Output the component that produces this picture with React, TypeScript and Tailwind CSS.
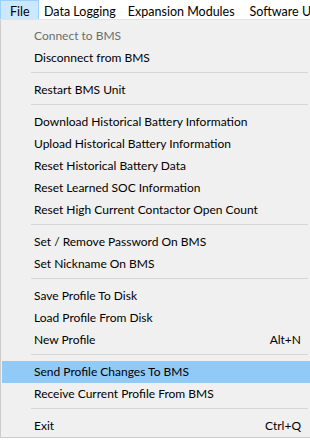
import React from 'react'
import clsx from 'clsx'

type Item =
  | { type: 'item'; label: string; shortcut?: string; disabled?: boolean; active?: boolean }
  | { type: 'sep' }

const items: Array<Item> = [
  { type: 'item', label: 'Connect to BMS', disabled: true },
  { type: 'item', label: 'Disconnect from BMS' },
  { type: 'sep' },
  { type: 'item', label: 'Restart BMS Unit' },
  { type: 'sep' },
  { type: 'item', label: 'Download Historical Battery Information' },
  { type: 'item', label: 'Upload Historical Battery Information' },
  { type: 'item', label: 'Reset Historical Battery Data' },
  { type: 'item', label: 'Reset Learned SOC Information' },
  { type: 'item', label: 'Reset High Current Contactor Open Count' },
  { type: 'sep' },
  { type: 'item', label: 'Set / Remove Password On BMS' },
  { type: 'item', label: 'Set Nickname On BMS' },
  { type: 'sep' },
  { type: 'item', label: 'Save Profile To Disk' },
  { type: 'item', label: 'Load Profile From Disk' },
  { type: 'item', label: 'New Profile', shortcut: 'Alt+N' },
  { type: 'sep' },
  { type: 'item', label: 'Send Profile Changes To BMS', active: true },
  { type: 'item', label: 'Receive Current Profile From BMS' },
  { type: 'sep' },
  { type: 'item', label: 'Exit', shortcut: 'Ctrl+Q' },
]

const MenuBar = () => (
  <div className="flex h-[20px] items-stretch whitespace-nowrap border-b border-[#e3e3e3] bg-white text-[12.5px]">
    <div className="flex w-[39px] shrink-0 items-center border border-b-0 border-[#99d1ff] bg-[#cce8ff] pt-[5px] pl-[9px]">File</div>
    <div className="flex shrink-0 items-center pt-[5px] pl-[5px] pr-[12px]">Data Logging</div>
    <div className="flex shrink-0 items-center pt-[5px] pr-[15px]">Expansion Modules</div>
    <div className="flex shrink-0 items-center pt-[5px]">Software Updates</div>
  </div>
)

const App = () => {
  return (
    <div
      className="h-[440px] w-[310px] overflow-hidden bg-white text-[12px] text-black"
      style={{ fontFamily: 'Lato, sans-serif' }}
    >
      <MenuBar />
      <div className="w-[313px] border border-t-0 border-[#cccccc] bg-[#f0f0f0] pt-[5px] pb-0 pl-[1px]">
        {items.map((item, i) =>
          item.type === 'sep' ? (
            <div key={i} className="h-[10px] pt-[3px] pl-[29px] pr-[4px]">
              <div className="h-px bg-[#d7d7d7]" />
            </div>
          ) : (
            <div
              key={i}
              className={clsx(
                'flex h-[22px] items-center pl-[32px] pr-[11px] whitespace-nowrap',
                item.active && 'bg-[#91c9f7]',
                item.disabled && 'text-[#6d6d6d]'
              )}
            >
              <span>{item.label}</span>
              {item.shortcut && <span className="ml-auto">{item.shortcut}</span>}
            </div>
          )
        )}
      </div>
    </div>
  )
}

export default App
